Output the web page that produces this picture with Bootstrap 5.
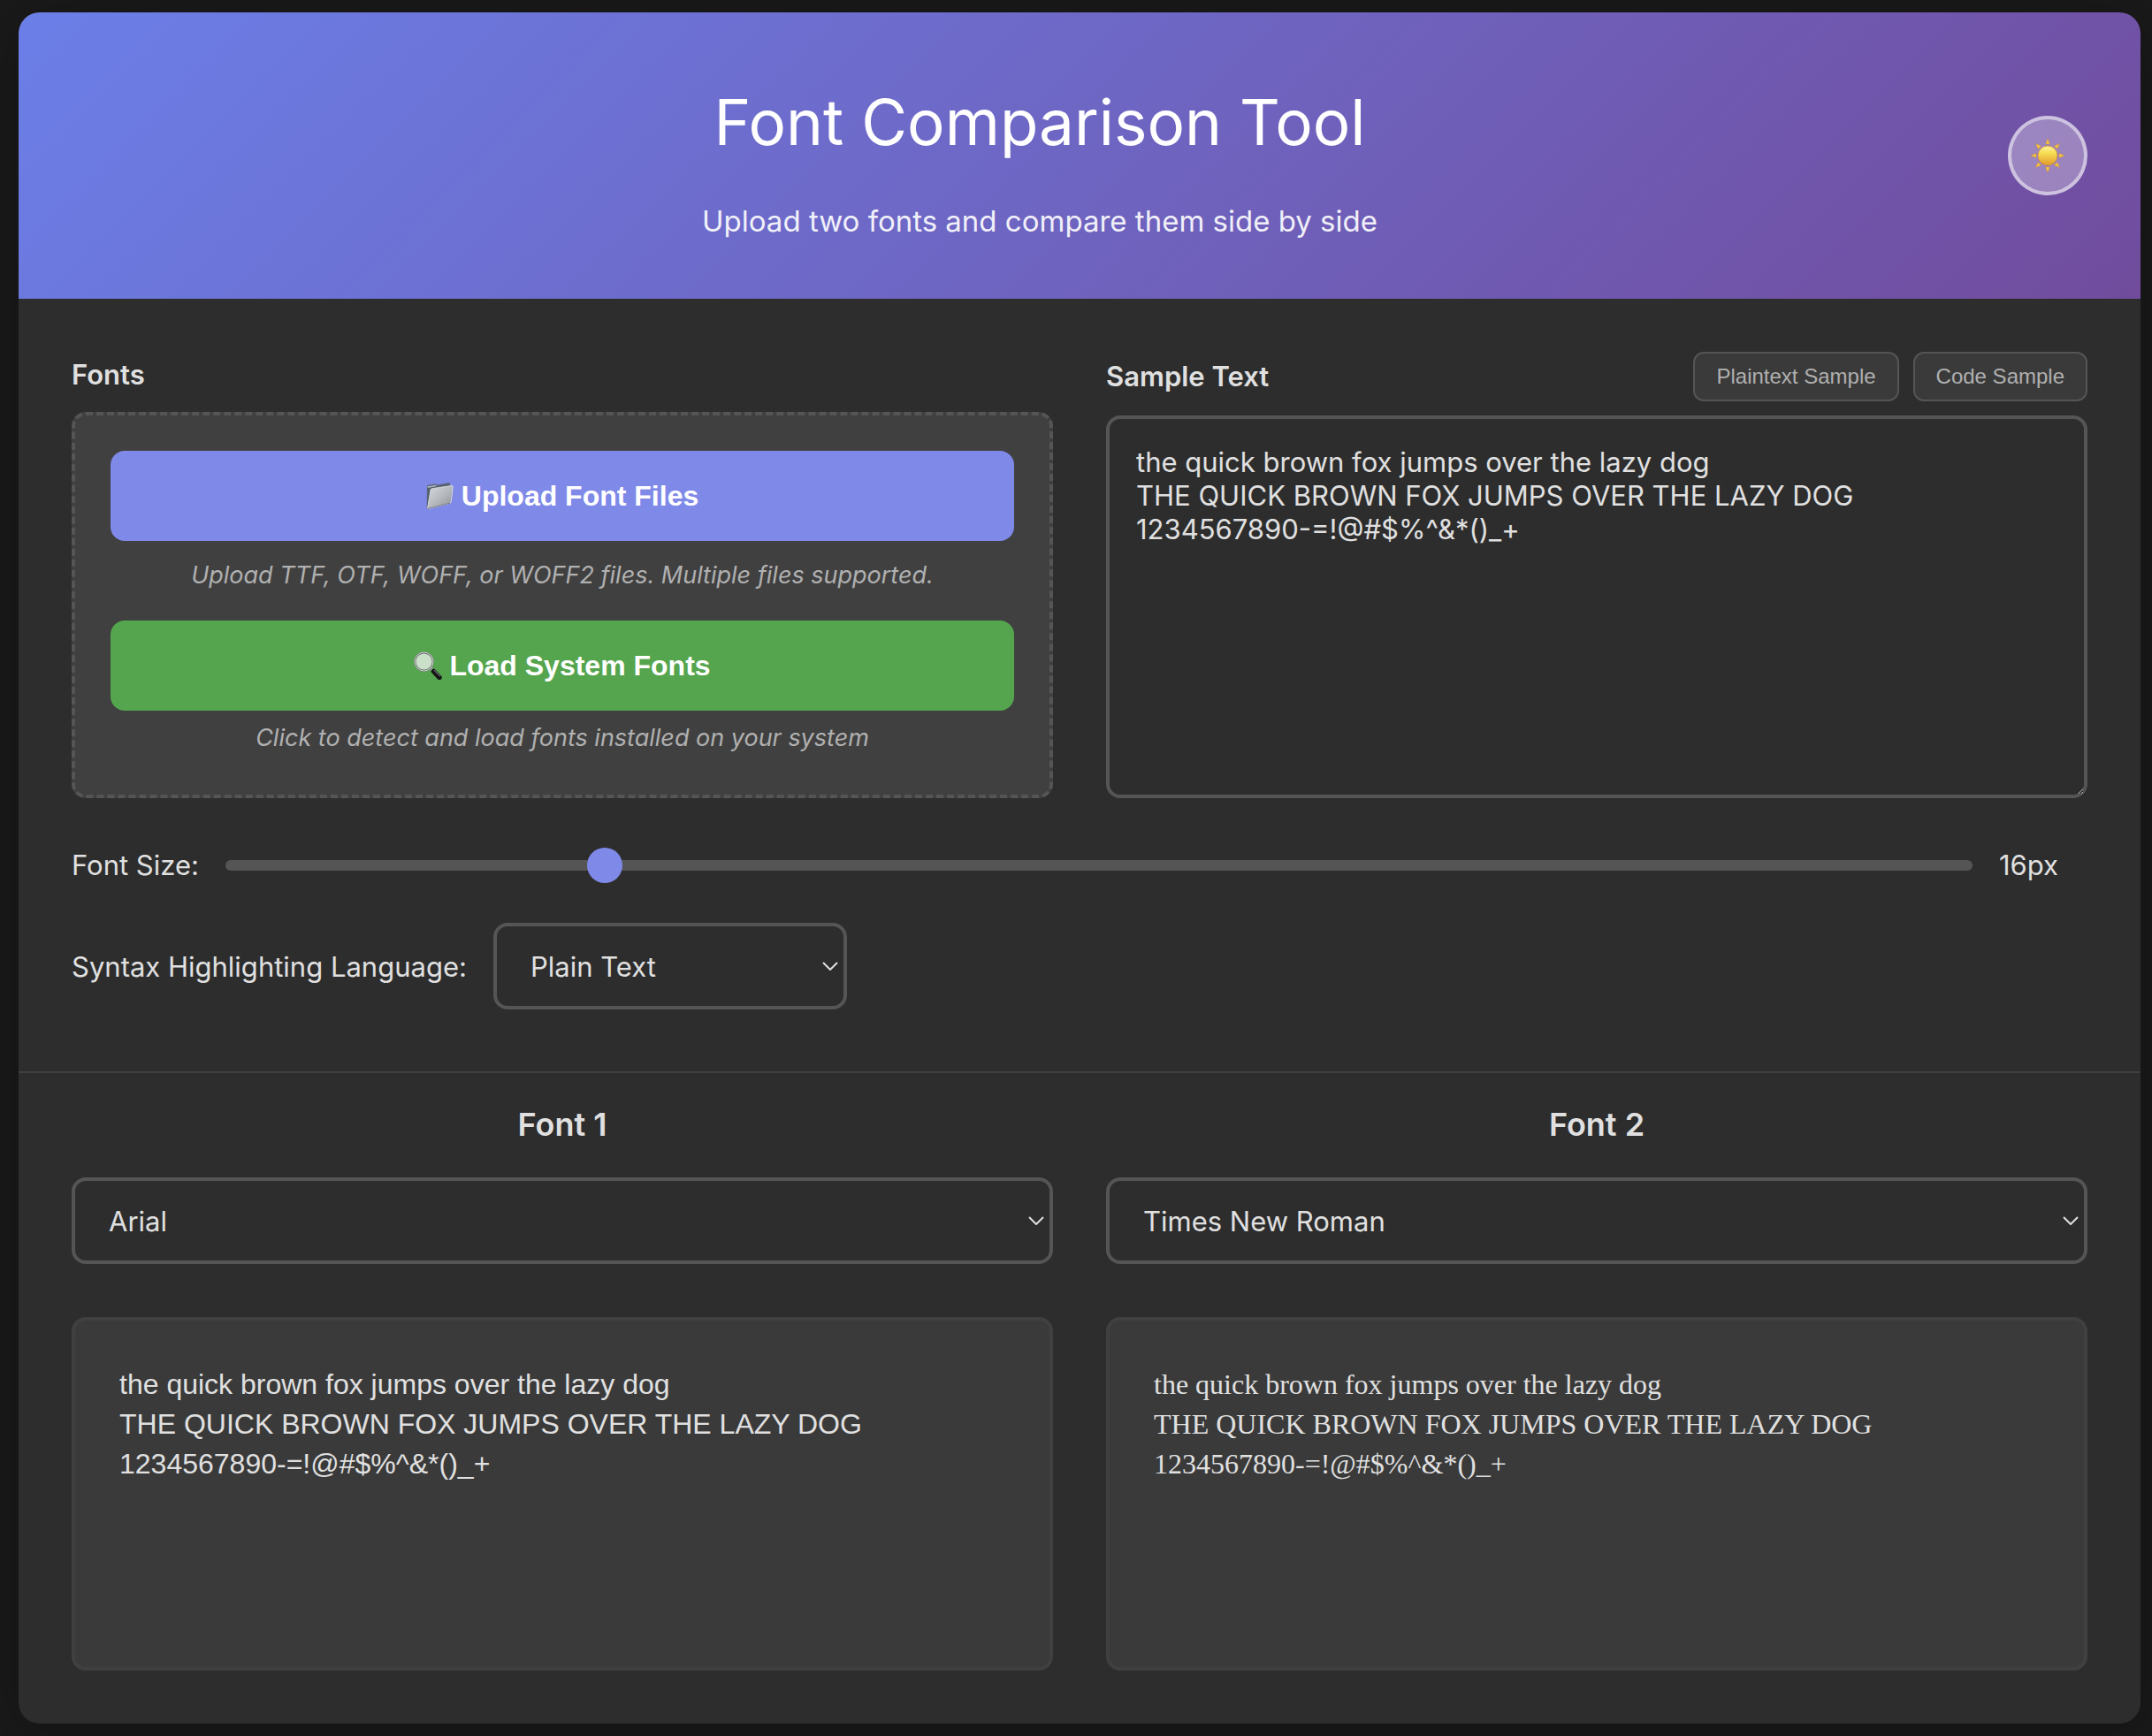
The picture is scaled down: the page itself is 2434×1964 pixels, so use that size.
<!DOCTYPE html>
<html lang="en" data-bs-theme="dark">
<head>
<meta charset="utf-8">
<meta name="viewport" content="width=device-width, initial-scale=1">
<title>Font Comparison Tool</title>
<link href="https://cdn.jsdelivr.net/npm/bootstrap@5.3.0/dist/css/bootstrap.min.css" rel="stylesheet">
<style>
  :root {
    --page: #1a1a1a;
    --surface: #2d2d2d;
    --panel: #3a3a3a;
    --raised: #404040;
    --line: #555;
    --ink: #e0e0e0;
    --muted: #b0b0b0;
    --accent: #7f89e8;
    --success: #55a54e;
  }
  body {
    padding: 14px 13px 14px 21px;
    background: var(--page);
    color: var(--ink);
    font-family: Inter, "Liberation Sans", sans-serif;
    font-size: 31px;
    line-height: 51px;
  }
  .app-shell {
    background: var(--surface);
    border-radius: 24px;
    box-shadow: 0 8px 64px rgba(0, 0, 0, .3);
  }
  .app-header {
    padding: 60px;
    border-radius: 24px 24px 0 0;
    color: #fff;
    background: linear-gradient(135deg, #6b7fe8 0%, #714c9d 100%);
  }
  .app-title { font-size: 71px; line-height: 128px; font-weight: 400; margin-bottom: 20px; color: #fff; }
  .app-subtitle { font-size: 33px; line-height: 56px; opacity: .9; }
  .theme-toggle {
    width: 90px;
    height: 90px;
    border: 4px solid rgba(255, 255, 255, .5);
    background: rgba(255, 255, 255, .3);
  }
  .controls { padding: 60px 60px 70px; border-bottom: 2px solid var(--raised); }
  .compare { padding: 30px 60px 60px; }
  .two-up { --bs-gutter-x: 60px; }
  .field-title { font-size: 31px; font-weight: 600; line-height: 52px; color: var(--ink); }
  .drop-zone { padding: 40px; background: var(--raised); border: 4px dashed var(--line); border-radius: 16px; }
  .big-btn {
    --bs-btn-color: #fff;
    --bs-btn-hover-color: #fff;
    height: 102px;
    border: 0;
    border-radius: 16px;
    font: bold 32px/38px "Liberation Sans", Arial, sans-serif;
  }
  .big-btn svg { width: 32px; height: 32px; }
  .btn-upload { --bs-btn-bg: var(--accent); --bs-btn-hover-bg: #6f7ae0; }
  .btn-system { --bs-btn-bg: var(--success); --bs-btn-hover-bg: #489341; margin-top: 28px; }
  .hint { font-size: 27px; line-height: 46px; font-style: italic; color: var(--muted); }
  .sample-btn {
    --bs-btn-color: var(--muted);
    --bs-btn-bg: var(--panel);
    --bs-btn-border-color: var(--line);
    --bs-btn-hover-color: var(--ink);
    --bs-btn-hover-bg: var(--raised);
    --bs-btn-hover-border-color: var(--line);
    height: 56px;
    padding: 0 24px;
    border-width: 2px;
    border-radius: 12px;
    font: 24px/30px "Liberation Sans", Arial, sans-serif;
  }
  .sample-input, .picker, .sample-input:focus, .picker:focus {
    color: var(--ink);
    background-color: var(--surface);
    border: 4px solid var(--line);
    border-radius: 16px;
  }
  textarea.sample-input { min-height: 433px; padding: 30px; font-size: 31px; line-height: 38px; }
  .picker {
    height: 98px;
    padding: 0 60px 0 38px;
    font-size: 31px;
    line-height: 51px;
    background-image: url("data:image/svg+xml,%3Csvg xmlns='http://www.w3.org/2000/svg' viewBox='0 0 18 10'%3E%3Cpath d='M1 1l8 8 8-8' fill='none' stroke='%23e0e0e0' stroke-width='2'/%3E%3C/svg%3E");
    background-position: right 6px center;
    background-size: 18px 10px;
  }
  .language-picker { width: 400px; }
  .size-range { height: 40px; }
  .size-range::-webkit-slider-runnable-track { height: 12px; background: var(--line); border-radius: 6px; }
  .size-range::-webkit-slider-thumb { width: 40px; height: 40px; margin-top: -14px; background: var(--accent); border-radius: 50%; }
  .size-range::-moz-range-track { height: 12px; background: var(--line); border-radius: 6px; }
  .size-range::-moz-range-thumb { width: 40px; height: 40px; background: var(--accent); }
  .size-value { min-width: 100px; }
  .setting-row { gap: 30px; }
  .size-row { margin: 50px 0 40px; }
  .font-title { font-size: 36px; line-height: 56px; font-weight: 600; margin-bottom: 32px; color: var(--ink); }
  .preview {
    min-height: 400px;
    margin-top: 60px;
    padding: 50px;
    background: var(--panel);
    border: 4px solid var(--raised);
    border-radius: 16px;
    font-size: 32px;
    line-height: 45px;
    white-space: pre-line;
  }
  .face-arial { font-family: Arial, "Liberation Sans", sans-serif; }
  .face-times { font-family: "Times New Roman", "Liberation Serif", serif; }
</style>
</head>
<body>
<main class="app-shell">
  <header class="app-header d-flex align-items-center">
    <div class="flex-grow-1 text-center">
      <h1 class="app-title">Font Comparison Tool</h1>
      <p class="app-subtitle mb-0">Upload two fonts and compare them side by side</p>
    </div>
    <button type="button" class="theme-toggle rounded-circle d-flex align-items-center justify-content-center p-0 flex-shrink-0" aria-label="Toggle theme">
      <svg width="40" height="40" viewBox="0 0 40 40" aria-hidden="true">
        <defs>
          <linearGradient id="sunDisc" x1="0" y1="0" x2="0" y2="1"><stop offset="0" stop-color="#fdf3a0"/><stop offset=".35" stop-color="#f7df55"/><stop offset="1" stop-color="#e39a2c"/></linearGradient>
          <path id="ray" d="M20 1l2.500 6h-5z"/>
        </defs>
        <g fill="#f5c545" stroke="#c98a3c" stroke-width=".5">
          <use href="#ray"/><use href="#ray" transform="rotate(45 20 20)"/><use href="#ray" transform="rotate(90 20 20)"/><use href="#ray" transform="rotate(135 20 20)"/>
          <use href="#ray" transform="rotate(180 20 20)"/><use href="#ray" transform="rotate(225 20 20)"/><use href="#ray" transform="rotate(270 20 20)"/><use href="#ray" transform="rotate(315 20 20)"/>
        </g>
        <circle cx="20" cy="20" r="11" fill="url(#sunDisc)" stroke="#cf8a35" stroke-width=".8"/>
      </svg>
    </button>
  </header>

  <section class="controls">
    <div class="row two-up">
      <div class="col-6 d-flex flex-column">
        <h2 class="field-title mb-3">Fonts</h2>
        <div class="drop-zone flex-grow-1 text-center">
          <button type="button" class="btn big-btn btn-upload w-100 d-flex align-items-center justify-content-center gap-2 mb-3">
            <svg viewBox="0 0 32 32" aria-hidden="true">
              <defs><linearGradient id="folderFront" x1="0" y1="0" x2="1" y2="1"><stop offset="0" stop-color="#d5d8dc"/><stop offset=".5" stop-color="#b7babf"/><stop offset="1" stop-color="#8e9196"/></linearGradient></defs>
              <path d="M1 5.500Q1 4 2.500 3.700L10.500 2.500Q12 2.300 12 3.700L25.500 1.200Q27 1 27 2.500V9L3.500 29 1.500 30.500Q.6 30.500.7 29z" fill="#56626f"/>
              <path d="M1.200 5.300L10.800 3.700 12 5l-10 2z" fill="#a9b4bf"/>
              <path d="M5 9.500Q5.200 8 6.700 7.700L28.600 4.500Q30.400 4.300 30.200 6L28.300 22.500Q28.100 24 26.500 24.500L2.800 30.500Q1.500 30.700 1.700 29.300z" fill="url(#folderFront)" stroke="#dfe2e5" stroke-width=".8"/>
              <path d="M1.800 30.400l25-6.200" stroke="#777b80" fill="none"/>
            </svg>
            Upload Font Files
          </button>
          <p class="hint mb-0">Upload TTF, OTF, WOFF, or WOFF2 files. Multiple files supported.</p>
          <button type="button" class="btn big-btn btn-system w-100 d-flex align-items-center justify-content-center gap-2 mb-2">
            <svg viewBox="0 0 32 32" aria-hidden="true">
              <path d="M19.500 19.500l2 2" stroke="#9aa09c" stroke-width="3.500"/>
              <path d="M22.500 22.500l6.500 7" stroke="#151515" stroke-width="5.500" stroke-linecap="round"/>
              <path d="M23.500 21.500l6 6.300" stroke="#6d6d72" stroke-width="1.200" stroke-linecap="round"/>
              <circle cx="11.500" cy="11.500" r="10.200" fill="#cbe0c8" stroke="#6f7772" stroke-width="2.200"/>
              <circle cx="11.500" cy="11.500" r="10.500" fill="none" stroke="#d5dbd6" stroke-width=".9"/>
            </svg>
            Load System Fonts
          </button>
          <p class="hint mb-0">Click to detect and load fonts installed on your system</p>
        </div>
      </div>
      <div class="col-6">
        <div class="d-flex align-items-center justify-content-between mb-3">
          <label class="field-title" for="sampleText">Sample Text</label>
          <div class="d-flex gap-3">
            <button type="button" class="btn sample-btn">Plaintext Sample</button>
            <button type="button" class="btn sample-btn">Code Sample</button>
          </div>
        </div>
        <textarea id="sampleText" class="form-control sample-input" spellcheck="false">the quick brown fox jumps over the lazy dog
THE QUICK BROWN FOX JUMPS OVER THE LAZY DOG
1234567890-=!@#$%^&amp;*()_+</textarea>
      </div>
    </div>

    <div class="d-flex align-items-center setting-row size-row">
      <label class="text-nowrap" for="fontSize">Font Size:</label>
      <input type="range" id="fontSize" class="form-range size-range" min="1" max="72" value="16">
      <output class="size-value" for="fontSize">16px</output>
    </div>

    <div class="d-flex align-items-center setting-row">
      <label for="language">Syntax Highlighting Language:</label>
      <select id="language" class="form-select picker language-picker">
        <option selected>Plain Text</option>
        <option>JavaScript</option>
        <option>Python</option>
      </select>
    </div>
  </section>

  <section class="compare">
    <div class="row two-up">
      <div class="col-6">
        <h2 class="font-title text-center">Font 1</h2>
        <select class="form-select picker" aria-label="Font 1">
          <option selected>Arial</option>
          <option>Times New Roman</option>
        </select>
        <div class="preview face-arial">the quick brown fox jumps over the lazy dog
THE QUICK BROWN FOX JUMPS OVER THE LAZY DOG
1234567890-=!@#$%^&amp;*()_+</div>
      </div>
      <div class="col-6">
        <h2 class="font-title text-center">Font 2</h2>
        <select class="form-select picker" aria-label="Font 2">
          <option>Arial</option>
          <option selected>Times New Roman</option>
        </select>
        <div class="preview face-times">the quick brown fox jumps over the lazy dog
THE QUICK BROWN FOX JUMPS OVER THE LAZY DOG
1234567890-=!@#$%^&amp;*()_+</div>
      </div>
    </div>
  </section>
</main>
<script src="https://cdn.jsdelivr.net/npm/bootstrap@5.3.0/dist/js/bootstrap.bundle.min.js"></script>
</body>
</html>
